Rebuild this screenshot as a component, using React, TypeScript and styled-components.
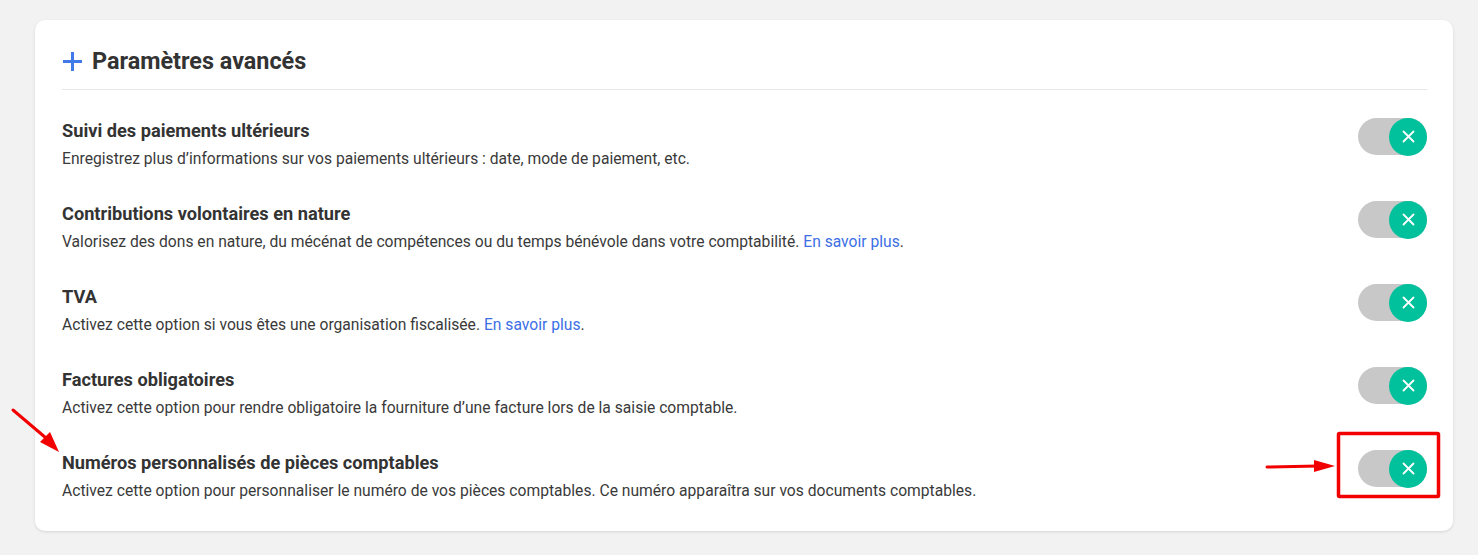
import React from "react";
import styled, { createGlobalStyle } from "styled-components";

const GlobalStyle = createGlobalStyle`
  html, body {
    margin: 0;
    padding: 0;
    background: #f2f2f2;
    font-family: Roboto, "Liberation Sans", Arial, sans-serif;
    color: #333;
  }
`;

type Option = {
  title: string;
  text: string;
  link?: boolean;
};

const options: Option[] = [
  {
    title: "Suivi des paiements ultérieurs",
    text: "Enregistrez plus d’informations sur vos paiements ultérieurs : date, mode de paiement, etc.",
  },
  {
    title: "Contributions volontaires en nature",
    text: "Valorisez des dons en nature, du mécénat de compétences ou du temps bénévole dans votre comptabilité.",
    link: true,
  },
  {
    title: "TVA",
    text: "Activez cette option si vous êtes une organisation fiscalisée.",
    link: true,
  },
  {
    title: "Factures obligatoires",
    text: "Activez cette option pour rendre obligatoire la fourniture d’une facture lors de la saisie comptable.",
  },
  {
    title: "Numéros personnalisés de pièces comptables",
    text: "Activez cette option pour personnaliser le numéro de vos pièces comptables. Ce numéro apparaîtra sur vos documents comptables.",
  },
];

const App = () => {
  return (
    <Page>
      <GlobalStyle />
      <Card>
        <Header>
          <PlusIcon viewBox="0 0 19 19">
            <path d="M9.5 0v19M0 9.5h19" stroke="#3f7ae8" strokeWidth="3" />
          </PlusIcon>
          <HeaderTitle>Paramètres avancés</HeaderTitle>
        </Header>
        <List>
          {options.map((opt, idx) => (
            <Row key={idx}>
              <Texts>
                <RowTitle>{opt.title}</RowTitle>
                <RowText>
                  {opt.text}
                  {opt.link && (
                    <>
                      {" "}
                      <MoreLink href="#">En savoir plus</MoreLink>.
                    </>
                  )}
                </RowText>
              </Texts>
              <Toggle>
                <Knob>
                  <svg width="13" height="13" viewBox="0 0 13 13">
                    <path
                      d="M1.5 1.5l10 10M11.5 1.5l-10 10"
                      stroke="#fff"
                      strokeWidth="1.8"
                      strokeLinecap="round"
                    />
                  </svg>
                </Knob>
              </Toggle>
            </Row>
          ))}
        </List>
      </Card>
      <Overlay width="1478" height="555" viewBox="0 0 1478 555">
        <line x1="13" y1="410" x2="46" y2="438" stroke="#f20000" strokeWidth="3" strokeLinecap="round" />
        <polygon points="59,452 40,442 50,432" fill="#f20000" />
        <line x1="1267" y1="467" x2="1318" y2="466" stroke="#f20000" strokeWidth="3" strokeLinecap="round" />
        <polygon points="1335,466 1314,460 1314,472" fill="#f20000" />
        <rect x="1338.5" y="433.5" width="100" height="63" fill="none" stroke="#f20000" strokeWidth="3.5" rx="1" />
      </Overlay>
    </Page>
  );
};

const Page = styled.div`
  position: relative;
  padding: 20px 25px 24px 35px;
  min-height: 555px;
  box-sizing: border-box;
`;

const Card = styled.div`
  background: #fff;
  border-radius: 10px;
  box-shadow: 0 1px 3px rgba(0, 0, 0, 0.12);
  padding: 0 26px 29px 27px;
`;

const Header = styled.div`
  display: flex;
  align-items: center;
  gap: 10px;
  padding: 27px 0 13px;
  border-bottom: 1px solid #e6e6e6;
`;

const PlusIcon = styled.svg`
  width: 19px;
  height: 19px;
  margin-left: 1px;
`;

const HeaderTitle = styled.h2`
  margin: 0;
  font-size: 23.4px;
  line-height: 29px;
  font-weight: 700;
  color: #333;
`;

const List = styled.div`
  display: flex;
  flex-direction: column;
  gap: 33px;
  padding-top: 30px;
`;

const Row = styled.div`
  display: flex;
  justify-content: space-between;
  align-items: flex-start;
`;

const Texts = styled.div`
  display: flex;
  flex-direction: column;
  gap: 6px;
`;

const RowTitle = styled.div`
  font-size: 18.2px;
  line-height: 22px;
  font-weight: 700;
  color: #333;
`;

const RowText = styled.div`
  font-size: 15.65px;
  line-height: 22px;
  color: #3a3a3a;
`;

const MoreLink = styled.a`
  color: #3d6fe6;
  text-decoration: none;
`;

const Toggle = styled.div`
  position: relative;
  width: 69px;
  height: 37px;
  margin-top: -2px;
  border-radius: 19px;
  background: #c8c8c8;
  display: flex;
  justify-content: flex-end;
`;

const Knob = styled.div`
  width: 38px;
  height: 38px;
  margin-top: -0.5px;
  border-radius: 50%;
  background: #00c19c;
  display: flex;
  align-items: center;
  justify-content: center;
`;

const Overlay = styled.svg`
  position: absolute;
  left: 0;
  top: 0;
  pointer-events: none;
`;

export default App;
